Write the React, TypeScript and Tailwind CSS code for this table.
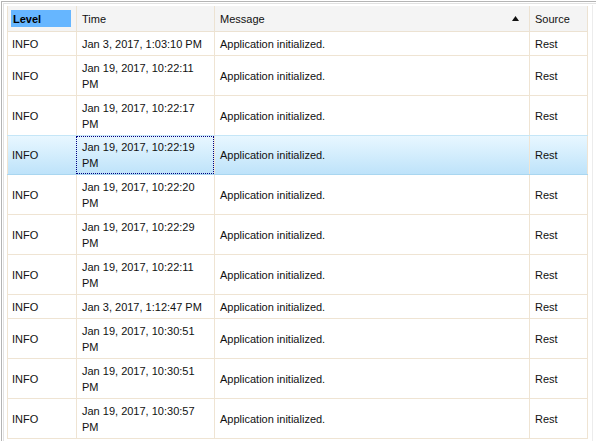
import React from "react";

type Row = { time: string; two: boolean };

const rows: Row[] = [
  { time: "Jan 3, 2017, 1:03:10 PM", two: false },
  { time: "Jan 19, 2017, 10:22:11 PM", two: true },
  { time: "Jan 19, 2017, 10:22:17 PM", two: true },
  { time: "Jan 19, 2017, 10:22:19 PM", two: true },
  { time: "Jan 19, 2017, 10:22:20 PM", two: true },
  { time: "Jan 19, 2017, 10:22:29 PM", two: true },
  { time: "Jan 19, 2017, 10:22:11 PM", two: true },
  { time: "Jan 3, 2017, 1:12:47 PM", two: false },
  { time: "Jan 19, 2017, 10:30:51 PM", two: true },
  { time: "Jan 19, 2017, 10:30:51 PM", two: true },
  { time: "Jan 19, 2017, 10:30:57 PM", two: true },
];

export default function App() {
  return (
    <div
      className="w-[596px] h-[441px] bg-white overflow-hidden text-[11px] leading-4 text-[#111]"
      style={{ fontFamily: '"Liberation Sans", Arial, sans-serif' }}
    >
      <div className="h-full ml-[1px] mt-[1px] border-l border-t border-[#b4b4b4] pl-[1px] pt-[1px]">
        <div className="h-full border-l border-t border-[#e2e2e2] pl-[3px] pt-[1px] flex">
          <div className="w-[581px] flex flex-col">
            {/* header */}
            <div className="flex h-[27px] bg-[#f4f4f4] border-b border-[#ece2d2] border-t border-t-white">
              <div className="w-[69px] border-l border-[#ece2d2] flex items-center pl-[3px]">
                <span className="bg-[#66b6ff] w-[60px] h-[17px] flex items-center pl-[2px] text-black font-bold">
                  Level
                </span>
              </div>
              <div className="w-[138px] border-l border-[#ece2d2] flex items-center pl-[5px]">Time</div>
              <div className="w-[315px] border-l border-[#ece2d2] flex items-center pl-[5px] pr-[10px] justify-between">
                <span>Message</span>
                <svg width="7" height="5" viewBox="0 0 7 5">
                  <path d="M3.5 0 L7 5 L0 5 Z" fill="#111" />
                </svg>
              </div>
              <div className="w-[59px] border-l border-r border-[#ece2d2] flex items-center pl-[5px]">Source</div>
            </div>
            {rows.map((r, i) => {
              const sel = i === 3;
              const h = r.two ? "h-[40px]" : "h-[24px]";
              return (
                <div
                  key={i}
                  className={`flex ${h} border-b ${
                    sel
                      ? "border-[#a9d6f0] bg-gradient-to-b from-[#e8f7ff] to-[#bee3fa] border-t border-t-[#c5e6f7] -mt-[1px]"
                      : "border-[#efe4d3]"
                  }`}
                >
                  <div className="w-[69px] border-l border-[#efe4d3] flex items-center pl-[4px]">INFO</div>
                  <div
                    className={`w-[138px] flex items-center ${
                      sel
                        ? "border border-dotted border-[#000080] pl-[5px]"
                        : "border-l border-[#efe4d3] pl-[5px]"
                    } pr-[6px]`}
                  >
                    <span>{r.time}</span>
                  </div>
                  <div className="w-[315px] border-l border-[#efe4d3] flex items-center pl-[5px]">
                    Application initialized.
                  </div>
                  <div className="w-[59px] border-l border-r border-[#efe4d3] flex items-center pl-[5px]">
                    Rest
                  </div>
                </div>
              );
            })}
          </div>
          <div className="w-[4px]" />
          <div className="w-[1px] h-full bg-[#ececec]" />
        </div>
      </div>
    </div>
  );
}
